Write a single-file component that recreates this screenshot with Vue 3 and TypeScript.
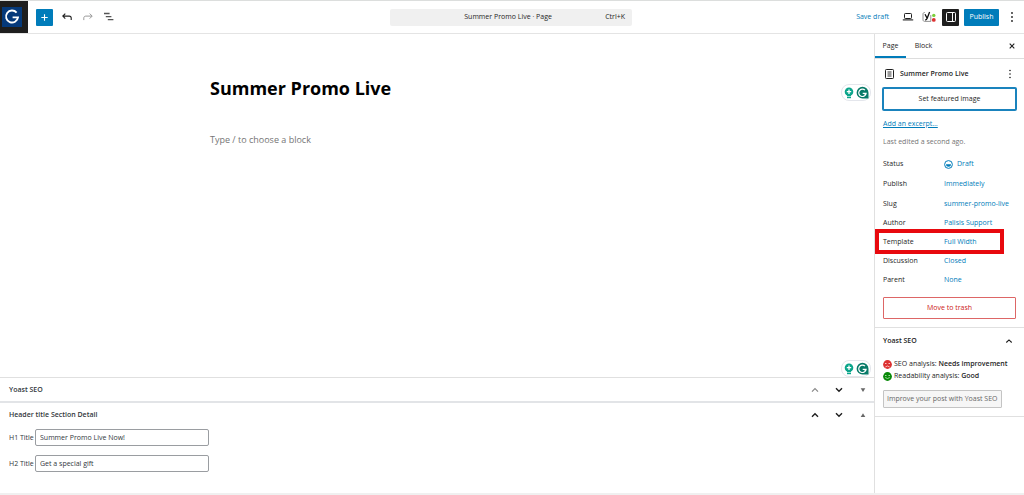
<script setup lang="ts">
import { ref } from 'vue'

interface SummaryRow {
  label: string
  value: string
  icon?: boolean
  marked?: boolean
}

const rows: SummaryRow[] = [
  { label: 'Status', value: 'Draft', icon: true },
  { label: 'Publish', value: 'Immediately' },
  { label: 'Slug', value: 'summer-promo-live' },
  { label: 'Author', value: 'Palisis Support' },
  { label: 'Template', value: 'Full Width', marked: true },
  { label: 'Discussion', value: 'Closed' },
  { label: 'Parent', value: 'None' },
]

const h1Title = ref('Summer Promo Live Now!')
const h2Title = ref('Get a special gift')
</script>

<template>
  <div class="editor">
    <header class="topbar">
      <a class="site" href="#" aria-label="View pages">
        <svg width="20" height="20" viewBox="0 0 20 20">
          <rect width="20" height="20" fill="#05397a" />
          <path d="M14.6 5.6A6 6 0 1 0 16 10.4H10.6" fill="none" stroke="#fff" stroke-width="1.9" />
        </svg>
      </a>
      <div class="tools">
        <button class="add" aria-label="Add block">
          <svg width="17" height="17" viewBox="0 0 17 17"><path d="M8.5 5.3v6.4M5.3 8.5h6.4" stroke="#fff" stroke-width="1.1" /></svg>
        </button>
        <button class="icon" aria-label="Undo">
          <svg width="12" height="12" viewBox="0 0 12 12" fill="none" stroke="#1e1e1e" stroke-width="1.1"><path d="M4.3 2.6 1.8 5.1l2.5 2.5M2 5.1h6.2c1.3 0 2 .8 2 2v2" /></svg>
        </button>
        <button class="icon" aria-label="Redo">
          <svg width="12" height="12" viewBox="0 0 12 12" fill="none" stroke="#999" stroke-width="1"><path d="m7.7 2.6 2.5 2.5-2.5 2.5M10 5.1H3.8c-1.3 0-2 .8-2 2v2" /></svg>
        </button>
        <button class="icon" aria-label="Document overview">
          <svg width="12" height="12" viewBox="0 0 12 12" stroke="#555" stroke-width="1.3"><path d="M1 2.5h5.6M2.8 5.6h5.6M4.8 8.7h5.6" /></svg>
        </button>
      </div>
      <button class="command">
        <span class="command-title">Summer Promo Live · Page</span>
        <span>Ctrl+K</span>
      </button>
      <div class="actions">
        <button class="link save">Save draft</button>
        <button class="icon preview" aria-label="Preview">
          <svg width="12" height="12" viewBox="0 0 12 12" fill="none" stroke="#1e1e1e"><rect x="2.5" y="2.5" width="7" height="5" rx=".8" /><path d="M.8 8.9h10.4" stroke-width="1.1" /></svg>
        </button>
        <button class="icon yoast" aria-label="Yoast SEO">
          <svg width="14" height="12" viewBox="0 0 14 12">
            <path d="M3 1.5h-.4C1.6 1.5 1 2.1 1 3v5.8c0 1 .6 1.6 1.6 1.6h6.2V4" fill="none" stroke="#777" stroke-width=".8" />
            <path d="M3 3.2 5 7M7.6 1 5.2 7.2C4.8 8.4 4.3 8.9 3.2 9" fill="none" stroke="#111" stroke-width="1.3" />
            <circle cx="11.8" cy="4.4" r="1.7" fill="#7ad03a" /><circle cx="11.8" cy="8.9" r="1.9" fill="#dc3232" />
          </svg>
        </button>
        <button class="panel-toggle" aria-label="Settings">
          <svg width="12" height="12" viewBox="0 0 12 12" fill="none" stroke="#fff"><rect x="1.5" y="1.5" width="9" height="9" rx="1" /><path d="M7.5 2v8" /></svg>
        </button>
        <button class="publish">Publish</button>
        <button class="icon more" aria-label="Options">
          <svg width="4" height="12" viewBox="0 0 4 12" fill="#1e1e1e"><circle cx="2" cy="2" r=".9" /><circle cx="2" cy="6" r=".9" /><circle cx="2" cy="10" r=".9" /></svg>
        </button>
      </div>
    </header>

    <div class="body">
      <main class="main">
        <section class="canvas">
          <h1>Summer Promo Live</h1>
          <p>Type / to choose a block</p>
          <div v-for="place in ['upper', 'lower']" :key="place" class="assist" :class="place">
            <svg width="10" height="14" viewBox="0 0 10 14">
              <circle cx="5" cy="5.7" r="4.3" fill="#0ba58b" /><path d="M3 9h4v3.2H3z" fill="#0ba58b" />
              <path d="M5 3.5v4.4M2.8 5.7h4.4" stroke="#fff" stroke-width="1.3" /><path d="M2.5 10.5h5" stroke="#fff" stroke-width=".6" />
            </svg>
            <svg width="13" height="14" viewBox="0 0 13 14">
              <path d="M6.5.8a6 6 0 0 1 6 6v5.8h-6a5.9 5.9 0 0 1 0-11.8z" fill="#087a68" />
              <path d="M9 4.1A3.7 3.7 0 1 0 10.1 7.4H6.7M8.6 9.2l1.7-1.6" fill="none" stroke="#fff" stroke-width="1.2" />
            </svg>
          </div>
        </section>

        <section class="metaboxes">
          <div class="meta-head">
            <h2>Yoast SEO</h2>
            <button class="icon" aria-label="Move up" disabled><svg width="8" height="6" viewBox="0 0 8 6"><path d="m1 4.7 3-3 3 3" fill="none" stroke="#888" stroke-width="1.2" /></svg></button>
            <button class="icon" aria-label="Move down"><svg width="8" height="6" viewBox="0 0 8 6"><path d="m1 1.3 3 3 3-3" fill="none" stroke="#1e1e1e" stroke-width="1.4" /></svg></button>
            <button class="icon" aria-label="Expand"><svg width="8" height="6" viewBox="0 0 8 6"><path d="M1.7 1.2h4.6L4 4.9z" fill="#666" /></svg></button>
          </div>
          <div class="meta-head second">
            <h2>Header title Section Detail</h2>
            <button class="icon" aria-label="Move up"><svg width="8" height="6" viewBox="0 0 8 6"><path d="m1 4.7 3-3 3 3" fill="none" stroke="#1e1e1e" stroke-width="1.4" /></svg></button>
            <button class="icon" aria-label="Move down"><svg width="8" height="6" viewBox="0 0 8 6"><path d="m1 1.3 3 3 3-3" fill="none" stroke="#1e1e1e" stroke-width="1.4" /></svg></button>
            <button class="icon" aria-label="Collapse"><svg width="8" height="6" viewBox="0 0 8 6"><path d="M1.7 4.9h4.6L4 1.2z" fill="#666" /></svg></button>
          </div>
          <div class="fields">
            <div class="field"><label for="h1-title">H1 Title</label><input id="h1-title" v-model="h1Title" type="text" /></div>
            <div class="field"><label for="h2-title">H2 Title</label><input id="h2-title" v-model="h2Title" type="text" /></div>
          </div>
        </section>
      </main>

      <aside class="sidebar">
        <nav class="tabs">
          <button class="tab active">Page</button>
          <button class="tab">Block</button>
          <button class="icon close" aria-label="Close settings">
            <svg width="8" height="8" viewBox="0 0 8 8"><path d="m1.7 1.7 4.6 4.6M6.3 1.7 1.7 6.3" stroke="#1e1e1e" stroke-width="1.1" /></svg>
          </button>
        </nav>
        <section class="summary">
          <div class="doc">
            <svg width="12" height="12" viewBox="0 0 12 12" fill="none" stroke="#1e1e1e"><rect x="2.5" y="1.5" width="8" height="9" rx=".8" /><path d="M4.5 4h4M4.5 6h4M4.5 8h4" stroke-width=".9" /></svg>
            <h2>Summer Promo Live</h2>
            <button class="icon" aria-label="Actions">
              <svg width="4" height="12" viewBox="0 0 4 12" fill="#1e1e1e"><circle cx="2" cy="2.5" r=".8" /><circle cx="2" cy="6" r=".8" /><circle cx="2" cy="9.5" r=".8" /></svg>
            </button>
          </div>
          <button class="featured">Set featured image</button>
          <a class="excerpt" href="#">Add an excerpt…</a>
          <p class="edited">Last edited a second ago.</p>
          <dl>
            <div v-for="row in rows" :key="row.label" class="row" :class="{ marked: row.marked }">
              <dt>{{ row.label }}</dt>
              <dd>
                <button class="link">
                  <svg v-if="row.icon" width="9" height="9" viewBox="0 0 9 9"><circle cx="4.5" cy="4.5" r="3.9" fill="none" stroke="#007cba" stroke-width="1" /><path d="M2 4.2h5a2.5 2.5 0 0 1-5 0z" fill="#007cba" /></svg>
                  {{ row.value }}
                </button>
              </dd>
            </div>
          </dl>
          <button class="trash">Move to trash</button>
        </section>
        <section class="seo">
          <div class="seo-head">
            <h2>Yoast SEO</h2>
            <button class="icon" aria-label="Collapse Yoast SEO"><svg width="8" height="6" viewBox="0 0 8 6"><path d="m1.3 4.5 2.7-2.6 2.7 2.6" fill="none" stroke="#1e1e1e" stroke-width="1.1" /></svg></button>
          </div>
          <p class="score">
            <svg width="9" height="9" viewBox="0 0 9 9"><circle cx="4.5" cy="4.5" r="4.4" fill="#dc3232" /><path d="M2 3h1.5v1H2zM5.5 3H7v1H5.5z" fill="#fbc4c4" /><path d="M2.3 7q2.2-2 4.4 0" fill="none" stroke="#fbc4c4" stroke-width=".9" /></svg>
            <span>SEO analysis: <strong>Needs improvement</strong></span>
          </p>
          <p class="score">
            <svg width="9" height="9" viewBox="0 0 9 9"><circle cx="4.5" cy="4.5" r="4.4" fill="#098a09" /><path d="M2 3h1.5v1H2zM5.5 3H7v1H5.5z" fill="#a6dca6" /><path d="M2.2 5.5q2.3 2 4.6 0" fill="none" stroke="#a6dca6" stroke-width=".9" /></svg>
            <span>Readability analysis: <strong>Good</strong></span>
          </p>
          <button class="improve">Improve your post with Yoast SEO</button>
        </section>
      </aside>
    </div>
  </div>
</template>

<style>
body {
  margin: 0;
  background: #fff;
}
</style>

<style scoped>
.editor {
  display: flex;
  flex-direction: column;
  min-height: 100vh;
  box-sizing: border-box;
  border-top: 1px solid #dcdedd;
  border-bottom: 2px solid #f0f0f0;
  font: 7px/12px 'Open Sans', 'Noto Sans', sans-serif;
  color: #1e1e1e;
}
* {
  box-sizing: border-box;
}
button,
input {
  font: inherit;
  color: inherit;
}
button {
  border: 0;
  padding: 0;
  background: none;
  white-space: nowrap;
}
svg {
  display: block;
  flex: none;
}
h1,
h2,
p,
dl,
dd {
  margin: 0;
}
h2 {
  font-size: 7px;
  font-weight: 600;
}
.icon {
  display: grid;
  place-items: center;
}
.link {
  color: #007cba;
}

.topbar {
  display: grid;
  grid-template-columns: 1fr 242px 1fr;
  align-items: center;
  height: 33px;
  padding-right: 2px;
  border-bottom: 1px solid #e4e4e4;
}
.site {
  grid-area: 1 / 1;
  display: flex;
  align-items: center;
  width: 28px;
  height: 32px;
  padding-left: 2px;
  background: #1e1e1e;
}
.tools {
  grid-area: 1 / 1;
  display: flex;
  align-items: center;
  gap: 9px;
  padding-left: 36px;
}
.add {
  background: #007cba;
  border-radius: 1px;
  margin-right: -1px;
}
.command {
  display: flex;
  align-items: center;
  height: 17px;
  padding: 0 7px;
  border-radius: 2px;
  background: #f0f0f0;
}
.command-title {
  flex: 1;
  padding-left: 14px;
}
.actions {
  display: flex;
  align-items: center;
  justify-content: flex-end;
  padding-right: 8px;
}
.save {
  margin-right: 13px;
}
.preview {
  margin-right: 8px;
}
.yoast {
  margin-right: 6px;
}
.panel-toggle {
  display: grid;
  place-items: center;
  width: 17px;
  height: 17px;
  margin-right: 5px;
  border-radius: 1px;
  background: #1e1e1e;
}
.publish {
  width: 35px;
  height: 17px;
  margin-right: 11px;
  border-radius: 1px;
  background: #007cba;
  color: #fff;
}

.body {
  flex: 1;
  display: grid;
  grid-template-columns: 1fr 150px;
}
.main {
  display: flex;
  flex-direction: column;
}
.canvas {
  flex: 1;
  position: relative;
  padding: 40px 210px 0;
}
h1 {
  font-size: 18px;
  line-height: 28px;
  font-weight: 700;
  color: #000;
}
.canvas p {
  margin-top: 31px;
  font-size: 9px;
  line-height: 14px;
  color: #757575;
}
.assist {
  position: absolute;
  right: 3px;
  display: flex;
  align-items: center;
  gap: 2px;
  height: 17px;
  padding: 0 1px 0 2px;
  border: 1px solid #e4e6ec;
  border-radius: 8px;
}
.upper {
  top: 50px;
}
.lower {
  bottom: 0;
}
.metaboxes {
  border-top: 1px solid #e0e0e0;
  color: #32373c;
}
.meta-head {
  display: flex;
  align-items: center;
  gap: 16px;
  height: 25px;
  padding: 0 7px 0 9px;
  border-bottom: 2px solid #e2e4e7;
}
.meta-head h2 {
  flex: 1;
}
.meta-head.second {
  height: 24px;
  border-bottom: 0;
}
.fields {
  display: grid;
  gap: 9px;
  padding: 2px 9px 21px;
}
.field {
  display: flex;
  align-items: center;
}
.field label {
  width: 26px;
  white-space: nowrap;
}
.field input {
  width: 174px;
  height: 17px;
  padding: 0 4px;
  border: 1px solid #9a9da1;
  border-radius: 2px;
  background: #fff;
}

.sidebar {
  border-left: 1px solid #e0e0e0;
}
.tabs {
  display: flex;
  height: 25px;
  border-bottom: 1px solid #ddd;
}
.tab {
  width: 31px;
}
.tab:nth-child(2) {
  width: 35px;
}
.tab.active {
  border-bottom: 2px solid #007cba;
  padding-top: 2px;
}
.close {
  margin-left: auto;
  padding-right: 8px;
}
.summary {
  padding: 2px 8px 8px;
  border-bottom: 1px solid #e0e0e0;
}
.doc {
  display: flex;
  align-items: center;
  gap: 5px;
  height: 26px;
}
.doc h2 {
  flex: 1;
}
.doc .icon {
  margin-right: 4px;
}
.featured {
  display: block;
  width: calc(100% + 2px);
  height: 24px;
  margin: 0 -1px 7px;
  border: 2px solid #1a83bd;
  border-radius: 2px;
}
.excerpt {
  display: block;
  color: #007cba;
}
.edited {
  margin: 6px 0;
  color: #757575;
}
.row {
  position: relative;
  display: grid;
  grid-template-columns: 61px 1fr;
  align-items: center;
  height: 19px;
}
.row:nth-child(-n + 2) {
  height: 20px;
}
.row .link {
  display: flex;
  align-items: center;
  gap: 4px;
}
.marked::after {
  content: '';
  position: absolute;
  inset: -3px 12px -3px -8px;
  border: 4px solid #e8090e;
}
.trash {
  width: 100%;
  height: 22px;
  margin-top: 8px;
  border: 1px solid #d66;
  border-radius: 1px;
  color: #cc1818;
  display: block;
}
.seo {
  padding: 0 8px 8px;
  border-bottom: 1px solid #e0e0e0;
}
.seo-head {
  display: flex;
  align-items: center;
  justify-content: space-between;
  height: 30px;
  padding: 0 3px 4px 0;
}
.score {
  display: flex;
  align-items: center;
  gap: 2px;
  white-space: nowrap;
}
.score strong {
  font-weight: 600;
}
.improve {
  height: 18px;
  margin-top: 8px;
  padding: 0 3px;
  border: 1px solid #c4c4c4;
  border-radius: 1px;
  background: #f6f6f6;
  color: #666;
  display: block;
}
</style>
